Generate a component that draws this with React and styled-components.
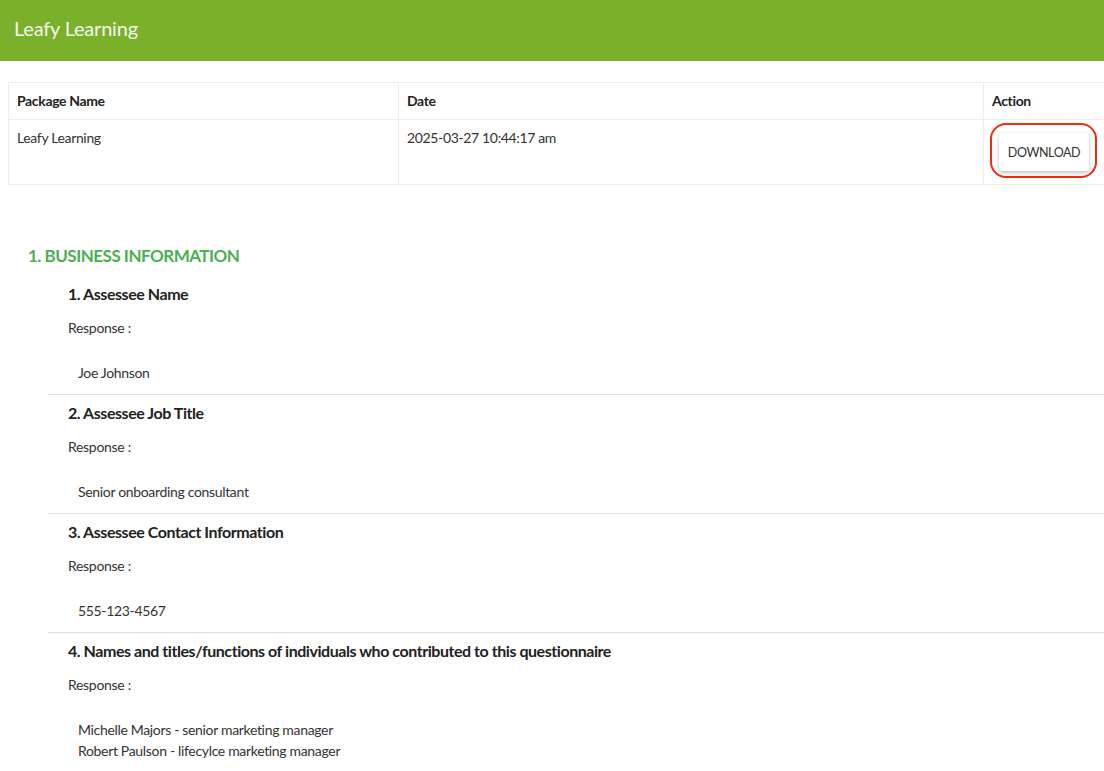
import React from "react";
import styled, { createGlobalStyle } from "styled-components";

const GlobalStyle = createGlobalStyle`
  html, body {
    margin: 0;
    padding: 0;
    background: #ffffff;
    overflow-x: hidden;
  }
  body {
    font-family: "Lato", "Open Sans", sans-serif;
    color: #333333;
  }
  * {
    box-sizing: border-box;
  }
`;

const TopBar = styled.header`
  height: 61px;
  background: #7bb02a;
  display: flex;
  align-items: center;
  padding-left: 14px;
  padding-bottom: 6px;
  color: #f4f9ee;
  font-size: 20px;
  letter-spacing: -0.2px;
`;

const Page = styled.main`
  padding-top: 21px;
  padding-left: 8px;
`;

const Table = styled.table`
  width: 1110px;
  border-collapse: collapse;
  font-size: 14px;
  letter-spacing: -0.35px;
`;

const HeadCell = styled.th`
  text-align: left;
  font-weight: 700;
  color: #222222;
  padding: 8px 8px;
  line-height: 20px;
  border: 1px solid #eeeeee;
  width: ${(p) => p.$w || "auto"};
`;

const Cell = styled.td`
  vertical-align: top;
  padding: 8px 8px;
  line-height: 20px;
  color: #333333;
  border: 1px solid #eeeeee;
`;

const ButtonWrap = styled.div`
  position: relative;
  display: inline-block;
  margin: 5px 0 5px 7px;
`;

const DownloadButton = styled.button`
  height: 38px;
  width: 90px;
  padding: 0;
  border: none;
  border-radius: 3px;
  background: #ffffff;
  box-shadow: 0 2px 4px rgba(0, 0, 0, 0.22), 0 0 2px rgba(0, 0, 0, 0.08);
  font-family: inherit;
  font-size: 12.5px;
  letter-spacing: -0.4px;
  color: #333333;
  cursor: pointer;
`;

const Ring = styled.span`
  position: absolute;
  top: -10px;
  left: -9px;
  right: -8px;
  bottom: -7px;
  border: 2.5px solid #ee2a10;
  border-radius: 16px;
  pointer-events: none;
`;

const Section = styled.section`
  margin-top: 58px;
`;

const SectionTitle = styled.h2`
  margin: 0 0 0 20px;
  font-size: 17px;
  line-height: 26px;
  font-weight: 700;
  letter-spacing: -0.5px;
  color: #4caf50;
`;

const QuestionList = styled.div`
  margin-top: 7px;
  margin-left: 40px;
`;

const Item = styled.div`
  padding: 6px 0 11px;
  border-top: ${(p) => (p.$first ? "none" : "1px solid #dddddd")};
`;

const Question = styled.h3`
  margin: 0;
  padding-left: 20px;
  font-size: 16px;
  line-height: 24px;
  font-weight: 700;
  letter-spacing: -0.45px;
  color: #222222;
`;

const ResponseLabel = styled.div`
  margin-top: 12px;
  padding-left: 20px;
  font-size: 14px;
  line-height: 20px;
  letter-spacing: -0.3px;
  color: #333333;
`;

const Answer = styled.div`
  margin-top: 24px;
  padding-left: 30px;
  font-size: 14px;
  line-height: 21px;
  letter-spacing: -0.33px;
  color: #333333;
`;

const items = [
  { q: "1. Assessee Name", a: ["Joe Johnson"] },
  { q: "2. Assessee Job Title", a: ["Senior onboarding consultant"] },
  { q: "3. Assessee Contact Information", a: ["555-123-4567"] },
  {
    q: "4. Names and titles/functions of individuals who contributed to this questionnaire",
    a: [
      "Michelle Majors - senior marketing manager",
      "Robert Paulson - lifecylce marketing manager",
    ],
  },
];

export default function App() {
  return (
    <>
      <GlobalStyle />
      <TopBar>Leafy Learning</TopBar>
      <Page>
        <Table>
          <thead>
            <tr>
              <HeadCell $w="390px">Package Name</HeadCell>
              <HeadCell $w="585px">Date</HeadCell>
              <HeadCell>Action</HeadCell>
            </tr>
          </thead>
          <tbody>
            <tr>
              <Cell>Leafy Learning</Cell>
              <Cell>2025-03-27 10:44:17 am</Cell>
              <Cell>
                <ButtonWrap>
                  <DownloadButton>DOWNLOAD</DownloadButton>
                  <Ring />
                </ButtonWrap>
              </Cell>
            </tr>
          </tbody>
        </Table>

        <Section>
          <SectionTitle>1. BUSINESS INFORMATION</SectionTitle>
          <QuestionList>
            {items.map((it, i) => (
              <Item key={it.q} $first={i === 0}>
                <Question>{it.q}</Question>
                <ResponseLabel>Response :</ResponseLabel>
                <Answer>
                  {it.a.map((line) => (
                    <div key={line}>{line}</div>
                  ))}
                </Answer>
              </Item>
            ))}
          </QuestionList>
        </Section>
      </Page>
    </>
  );
}
